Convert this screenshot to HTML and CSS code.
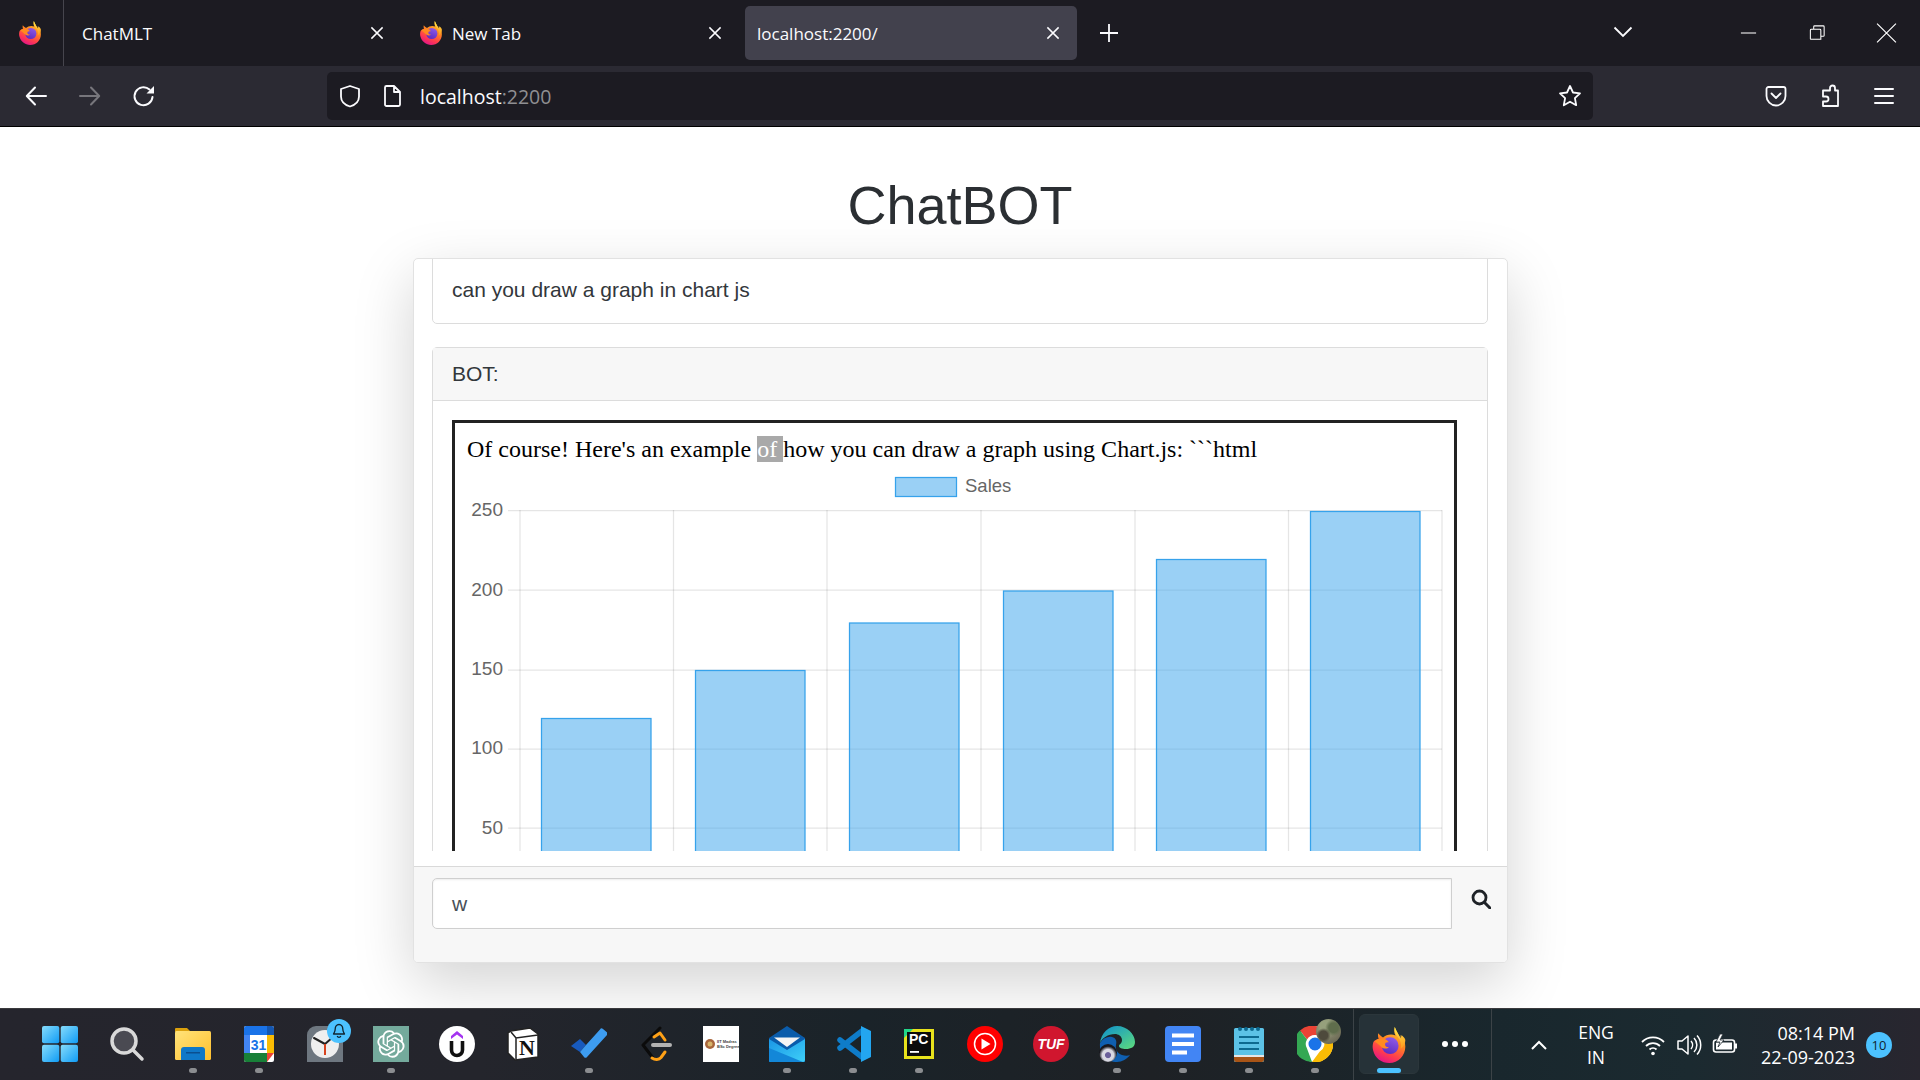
FILE: index.html
```html
<!DOCTYPE html>
<html lang="en">
<head>
<meta charset="utf-8">
<title>ChatBOT</title>
<link rel="stylesheet" href="styles.css">
</head>
<body>
<svg class="defs" aria-hidden="true">
  <defs>
    <linearGradient id="ffBody" x1="0.8" y1="0" x2="0.35" y2="1">
      <stop offset="0" stop-color="#ffd13a"/><stop offset="0.4" stop-color="#ff8a1f"/><stop offset="0.75" stop-color="#ff3b4e"/><stop offset="1" stop-color="#e31587"/>
    </linearGradient>
    <linearGradient id="ffTail" x1="0.4" y1="0" x2="0.6" y2="1">
      <stop offset="0" stop-color="#ffe847"/><stop offset="1" stop-color="#ff9a1f"/>
    </linearGradient>
    <linearGradient id="ffCore" x1="0.7" y1="0" x2="0.3" y2="1">
      <stop offset="0" stop-color="#8f5ae8"/><stop offset="1" stop-color="#5b2bc0"/>
    </linearGradient>
    <linearGradient id="winG" x1="0" y1="0" x2="1" y2="1">
      <stop offset="0" stop-color="#86dcfb"/><stop offset="1" stop-color="#0f9bf5"/>
    </linearGradient>
    <linearGradient id="folderG" x1="0" y1="0" x2="1" y2="1">
      <stop offset="0" stop-color="#ffe37a"/><stop offset="1" stop-color="#ffc02e"/>
    </linearGradient>
    <linearGradient id="mailG" x1="0" y1="0" x2="1" y2="1">
      <stop offset="0" stop-color="#1a96e6"/><stop offset="1" stop-color="#3fd0f8"/>
    </linearGradient>
    <linearGradient id="edgeG" x1="0" y1="0" x2="1" y2="1">
      <stop offset="0" stop-color="#0c8fd0"/><stop offset="1" stop-color="#5fdc7c"/>
    </linearGradient>
    <symbol id="firefox" viewBox="1.500 1 29 30">
      <path fill="url(#ffBody)" d="M3 13.500C2.200 16 2.200 18 2.800 20.500 4.300 26.800 9.800 31 16.200 31 23.800 31 29.600 25 29.600 17.500c0-3.200-1-6.200-3-8.600-.4-.5-.8-.9-1.200-1.300.5 1.600.4 2.800 0 3.800C24.600 8 22.600 5.600 20.800 1c-.8 2.600-.6 5 .6 7C18 6.600 13.500 7.300 11 9.800 10 9 8.200 7.800 7 6.200 6.600 8 6.800 9.600 7.400 10.800 5.600 11 4 12.200 3 13.500z"/>
      <path fill="url(#ffTail)" d="M20.800 1c-.5 3 .3 5.700 2.300 8 2.600 3 3.600 6.400 2.600 10.200 2.600-1.800 3.900-4.600 3.900-7.200 0-1.200-.8-2.400-3.200-4.400l-.1 3.400C24.600 8 22.600 5.600 20.800 1z"/>
      <circle cx="17" cy="16.600" r="7" fill="url(#ffCore)"/>
      <path fill="#ff8a1f" d="M4 13.200c2.200-2.400 5.200-3 8.200-2.200 1.600.4 3 1.400 3.600 2.800-2.400-.4-3.400.8-3 2.400.3 1.200 1.800 1.800 3.200 1.600-1.200 1.600-4.600 1.600-6.400-.2C8.400 16.400 6.600 14.400 4 13.200z"/>
    </symbol>
    <symbol id="close" viewBox="0 0 16 16"><path d="M3 3l10 10M13 3L3 13" fill="none" stroke="#fbfbfe" stroke-width="1.300"/></symbol>
  </defs>
</svg>

<header class="chrome">
  <div class="tabbar">
    <div class="ff-button"><svg class="ico24"><use href="#firefox"/></svg></div>
    <div class="tab"><span class="tab-title tab-title-plain">ChatMLT</span><svg class="tab-x"><use href="#close"/></svg></div>
    <div class="tab"><svg class="ico24"><use href="#firefox"/></svg><span class="tab-title">New Tab</span><svg class="tab-x"><use href="#close"/></svg></div>
    <div class="tab tab-active"><span class="tab-title">localhost:2200/</span><svg class="tab-x"><use href="#close"/></svg></div>
    <svg class="newtab" viewBox="0 0 20 20"><path d="M10 1v18M1 10h18" fill="none" stroke="#fbfbfe" stroke-width="1.800"/></svg>
    <svg class="tablist" viewBox="0 0 20 12"><path d="M1.500 1.500L10 10l8.500-8.500" fill="none" stroke="#fbfbfe" stroke-width="1.800"/></svg>
    <div class="winctl">
      <svg class="wc" viewBox="0 0 20 20"><path d="M2 10h16" stroke="#fff" stroke-width="1.100"/></svg>
      <svg class="wc" viewBox="0 0 20 20"><path d="M6 6V3.500A1 1 0 0 1 7 2.500h9a1 1 0 0 1 1 1v9a1 1 0 0 1-1 1h-2.500M3.500 6h9a1 1 0 0 1 1 1v9.500h-10.500a.5.5 0 0 1-.5-.5V7a1 1 0 0 1 1-1z" fill="none" stroke="#fff" stroke-width="1.100"/></svg>
      <svg class="wc wc-x" viewBox="0 0 20 20"><path d="M1 1l18 18M19 1L1 19" stroke="#fff" stroke-width="1.100" fill="none"/></svg>
    </div>
  </div>
  <div class="toolbar">
    <div class="navbtn"><svg class="ico24" viewBox="0 0 24 24"><path d="M22 12H3M11 3.500L2.800 12l8.200 8.500" fill="none" stroke="#fbfbfe" stroke-width="2" stroke-linecap="round" stroke-linejoin="round"/></svg></div>
    <div class="navbtn"><svg class="ico24" viewBox="0 0 24 24"><path d="M2 12h19M13 3.500L21.200 12 13 20.500" fill="none" stroke="#77767c" stroke-width="2" stroke-linecap="round" stroke-linejoin="round"/></svg></div>
    <div class="navbtn"><svg class="ico24" viewBox="0 0 24 24"><path d="M20.500 13a9 9 0 1 1-3-7.500" fill="none" stroke="#fbfbfe" stroke-width="2" stroke-linecap="round"/><path d="M22 2v7.500h-7.500z" fill="#fbfbfe"/></svg></div>
    <div class="urlbar">
      <svg class="ico24 shield" viewBox="0 0 24 24"><path d="M12 2l9 3v7.500c0 5-4 8.500-9 10-5-1.500-9-5-9-10V5z" fill="none" stroke="#fbfbfe" stroke-width="1.800" stroke-linejoin="round"/></svg>
      <svg class="ico24 pageicon" viewBox="0 0 24 24"><path d="M5 3.500A1.500 1.500 0 0 1 6.500 2H14l6 6v12.500a1.500 1.500 0 0 1-1.500 1.500h-12A1.500 1.500 0 0 1 5 20.500zM14 2v6h6" fill="none" stroke="#fbfbfe" stroke-width="1.800" stroke-linejoin="round"/></svg>
      <div class="url"><span class="url-host">localhost</span><span class="url-port">:2200</span></div>
      <svg class="ico24 star" viewBox="0 0 24 24"><path d="M12 2l3 6.500 7 .9-5.100 4.800 1.300 7L12 17.700l-6.200 3.500 1.300-7L2 9.400l7-.9z" fill="none" stroke="#fbfbfe" stroke-width="1.800" stroke-linejoin="round"/></svg>
    </div>
    <div class="toolright">
      <div class="navbtn"><svg class="ico24" viewBox="0 0 24 24"><path d="M2.500 5a2 2 0 0 1 2-2h15a2 2 0 0 1 2 2v7a9.500 9.500 0 0 1-19 0z" fill="none" stroke="#fbfbfe" stroke-width="1.800"/><path d="M7.500 9.500L12 14l4.500-4.500" fill="none" stroke="#fbfbfe" stroke-width="1.800" stroke-linecap="round" stroke-linejoin="round"/></svg></div>
      <div class="navbtn"><svg class="ico24" viewBox="0 0 24 24"><path d="M9 6.500H12V4a2.500 2.500 0 0 1 5 0V6.500h3V22H5v-4.500h3a2.500 2.500 0 0 0 0-5H5V6.500h4" fill="none" stroke="#fbfbfe" stroke-width="1.800" stroke-linejoin="round"/></svg></div>
      <div class="navbtn"><svg class="ico24" viewBox="0 0 24 24"><path d="M3 5h18M3 12h18M3 19h18" stroke="#fbfbfe" stroke-width="2" stroke-linecap="round"/></svg></div>
    </div>
  </div>
</header>

<main class="page">
  <h1 class="title">ChatBOT</h1>
  <section class="chat-card">
    <div class="chat-body">
      <div class="chat-scroll">
        <div class="msg msg-user">can you draw a graph in chart js</div>
        <div class="msg msg-bot">
          <div class="msg-head">BOT:</div>
          <div class="msg-content">
            <div class="bot-frame">
              <p class="bot-text">Of course! Here's an example <span class="sel">of </span>how you can draw a graph using Chart.js: ```html</p>
              <svg class="chart" viewBox="455 465 1000 400">
                <g class="grid">
                  <path d="M520 510V870M673.500 510V870M827 510V870M981 510V870M1135 510V870M1288.500 510V870M1442 510V870"/>
                  <path d="M508 510.500H1442M508 590H1442M508 670H1442M508 749H1442M508 828H1442"/>
                </g>
                <g class="bars">
                  <rect x="541.500" y="718.500" width="109.500" height="160"/>
                  <rect x="695.500" y="670.500" width="109.500" height="210"/>
                  <rect x="849.500" y="623" width="109.500" height="260"/>
                  <rect x="1003.500" y="591" width="109.500" height="290"/>
                  <rect x="1156.500" y="559.500" width="109.500" height="320"/>
                  <rect x="1310.500" y="511.500" width="109.500" height="370"/>
                </g>
                <rect class="legend-box" x="895.500" y="477.500" width="61" height="19"/>
                <text class="legend-text" x="965" y="492">Sales</text>
                <g class="ticks">
                  <text x="503" y="516">250</text>
                  <text x="503" y="596">200</text>
                  <text x="503" y="675">150</text>
                  <text x="503" y="754">100</text>
                  <text x="503" y="834">50</text>
                </g>
              </svg>
            </div>
          </div>
        </div>
      </div>
    </div>
    <div class="chat-foot">
      <div class="chat-input">w</div>
      <svg class="send" viewBox="0 0 20 20"><circle cx="8.500" cy="8.500" r="6.500" fill="none" stroke="#1f2328" stroke-width="2.800"/><path d="M13.500 13.500L19 19" stroke="#1f2328" stroke-width="3" stroke-linecap="round"/></svg>
    </div>
  </section>
</main>

<footer class="taskbar">
  <div class="apps">
    <div class="app app-win"><svg class="ti" viewBox="0 0 36 36"><rect x="0" y="0" width="17.300" height="17.300" rx="2" fill="url(#winG)"/><rect x="18.700" y="0" width="17.300" height="17.300" rx="2" fill="url(#winG)"/><rect x="0" y="18.700" width="17.300" height="17.300" rx="2" fill="url(#winG)"/><rect x="18.700" y="18.700" width="17.300" height="17.300" rx="2" fill="url(#winG)"/></svg><i class="no-dot"></i></div>
    <div class="app"><svg class="ti" viewBox="0 0 36 36"><circle cx="15" cy="15" r="12" fill="#4a4a52" stroke="#d9d9d9" stroke-width="3.500"/><path d="M24 24l9 9" stroke="#d9d9d9" stroke-width="3.500" stroke-linecap="round"/></svg><i class="no-dot"></i></div>
    <div class="app"><svg class="ti" viewBox="0 0 36 36"><path d="M0 3a1 1 0 0 1 1-1h11l4 4h-16z" fill="#dba10d"/><rect y="5" width="36" height="29" rx="1.500" fill="url(#folderG)"/><path d="M6 34V24a3 3 0 0 1 3-3h18a3 3 0 0 1 3 3v10z" fill="#0f78c8"/><rect x="11" y="26" width="14" height="1.500" fill="#0b4f8f"/></svg><i class="dot"></i></div>
    <div class="app"><svg class="ti" viewBox="0 0 36 36"><rect x="3" y="0" width="30" height="36" rx="2" fill="#fff"/><path d="M5 0h21v9H3V2a2 2 0 0 1 2-2z" fill="#1a73e8"/><path d="M26 0h5a2 2 0 0 1 2 2v7h-7z" fill="#1557b0"/><path d="M26 9h7v18h-7z" fill="#fbbc04"/><path d="M3 9h6v18H3z" fill="#4285f4"/><path d="M3 27h23v9H5a2 2 0 0 1-2-2z" fill="#188038"/><path d="M26 27h7l-7 9z" fill="#ea4335"/><text class="t-cal" x="17.500" y="23.500">31</text></svg><i class="dot"></i></div>
    <div class="app app-clock"><svg class="ti" viewBox="0 0 36 36"><path d="M9 0h18a9 9 0 0 1 9 9v27H0V9a9 9 0 0 1 9-9z" fill="#6e7780"/><circle cx="18" cy="18" r="14" fill="#efefef"/><path d="M18 18L7 12M18 18l8-7" stroke="#222" stroke-width="2" stroke-linecap="round"/><path d="M18 18v11" stroke="#d9431e" stroke-width="2"/></svg><span class="bell"><svg class="bell-i" viewBox="0 0 16 16"><path d="M8 1.500c-2.500 0-3.800 2-3.800 4.500 0 2.800-1 3.800-1.700 5h11c-.7-1.200-1.700-2.200-1.700-5C11.800 3.500 10.500 1.500 8 1.500zM6.200 13a1.900 1.900 0 0 0 3.600 0" fill="none" stroke="#10242f" stroke-width="1.300" stroke-linejoin="round"/></svg></span><i class="no-dot"></i></div>
    <div class="app"><svg class="ti" viewBox="0 0 36 36"><rect width="36" height="36" fill="#74aa9c"/><svg x="4" y="4" width="28" height="28" viewBox="0 0 41 41"><path fill="#fff" d="M37.532 16.87a9.963 9.963 0 0 0-.856-8.184 10.078 10.078 0 0 0-10.855-4.835A9.964 9.964 0 0 0 18.306.5a10.079 10.079 0 0 0-9.614 6.977 9.967 9.967 0 0 0-6.664 4.834 10.08 10.08 0 0 0 1.24 11.817 9.965 9.965 0 0 0 .856 8.185 10.079 10.079 0 0 0 10.855 4.835 9.965 9.965 0 0 0 7.516 3.35 10.078 10.078 0 0 0 9.617-6.981 9.967 9.967 0 0 0 6.663-4.834 10.079 10.079 0 0 0-1.243-11.813ZM22.498 37.886a7.474 7.474 0 0 1-4.799-1.735c.061-.033.168-.091.237-.134l7.964-4.6a1.294 1.294 0 0 0 .655-1.134V19.054l3.366 1.944a.12.12 0 0 1 .066.092v9.299a7.505 7.505 0 0 1-7.49 7.496ZM6.392 31.006a7.471 7.471 0 0 1-.894-5.023c.06.036.162.099.237.141l7.964 4.6a1.297 1.297 0 0 0 1.308 0l9.724-5.614v3.888a.12.12 0 0 1-.048.103l-8.051 4.649a7.504 7.504 0 0 1-10.24-2.744ZM4.297 13.62A7.469 7.469 0 0 1 8.2 10.333c0 .068-.004.19-.004.274v9.201a1.294 1.294 0 0 0 .654 1.132l9.723 5.614-3.366 1.944a.12.12 0 0 1-.114.01L7.04 23.856a7.504 7.504 0 0 1-2.743-10.237Zm27.658 6.437-9.724-5.615 3.367-1.943a.121.121 0 0 1 .113-.01l8.052 4.648a7.498 7.498 0 0 1-1.158 13.528v-9.476a1.293 1.293 0 0 0-.65-1.132Zm3.35-5.043c-.059-.037-.162-.099-.236-.141l-7.965-4.6a1.298 1.298 0 0 0-1.308 0l-9.723 5.614v-3.888a.12.12 0 0 1 .048-.103l8.05-4.645a7.497 7.497 0 0 1 11.135 7.763Zm-21.063 6.929-3.367-1.944a.12.12 0 0 1-.065-.092v-9.299a7.497 7.497 0 0 1 12.293-5.756 6.94 6.94 0 0 0-.236.134l-7.965 4.6a1.294 1.294 0 0 0-.654 1.132l-.006 11.225Zm1.829-3.943 4.33-2.501 4.332 2.5v5l-4.331 2.5-4.331-2.5V18Z"/></svg></svg><i class="dot"></i></div>
    <div class="app"><svg class="ti" viewBox="0 0 36 36"><circle cx="18" cy="18" r="18" fill="#fff"/><path d="M12 10l6-5 6 5v3l-6-4.500L12 13z" fill="#a435f0"/><path d="M12.500 15v9a5.500 5.500 0 0 0 11 0v-9" fill="none" stroke="#111" stroke-width="3.600"/></svg><i class="no-dot"></i></div>
    <div class="app"><svg class="ti" viewBox="0 0 36 36"><path d="M6 5l19-3 8 6v23l-23 3-7-7V7z" fill="#fff" stroke="#222" stroke-width="1.500"/><path d="M6 6l5 6 22-3M11 12v21" fill="none" stroke="#222" stroke-width="1.500"/><text class="t-notion" x="22" y="29">N</text></svg><i class="no-dot"></i></div>
    <div class="app"><svg class="ti" viewBox="0 0 36 36"><path d="M0 20l9-7 6 6-6 7z" fill="#185abd"/><path d="M9 26l4 5a2 2 0 0 0 3 0L36 9a2 2 0 0 0-.4-3L32 3a2 2 0 0 0-3 .4L15 19z" fill="#3d9cf0"/></svg><i class="dot"></i></div>
    <div class="app"><svg class="ti" viewBox="0 0 36 36"><path d="M23 2L6 19l10 13" fill="none" stroke="#0b0b0b" stroke-width="3" stroke-linecap="round" stroke-linejoin="round"/><path d="M17 11l6-4 5 7M15 32c3 2 7 2 9-.5l4-5.500" fill="none" stroke="#ffa116" stroke-width="3" stroke-linecap="round" stroke-linejoin="round"/><path d="M16 19h17" stroke="#b3b3b3" stroke-width="4" stroke-linecap="round"/></svg><i class="no-dot"></i></div>
    <div class="app"><svg class="ti" viewBox="0 0 36 36"><rect width="36" height="36" fill="#fff"/><circle cx="7" cy="18" r="5" fill="#a9663c"/><circle cx="7" cy="18" r="2.500" fill="#d7b46a"/><text class="t-iit" x="14" y="17">IIT Madras</text><text class="t-iit" x="14" y="22">BSc Degree</text></svg><i class="no-dot"></i></div>
    <div class="app"><svg class="ti" viewBox="0 0 36 36"><path d="M0 12L18 0l18 12v24H0z" fill="#0a5cab"/><path d="M5 11.500h26L18 21z" fill="#f4f4f4"/><path d="M0 13l18 11 18-11v21a2 2 0 0 1-2 2H2a2 2 0 0 1-2-2z" fill="url(#mailG)"/><path d="M0 34V22l34 14H2a2 2 0 0 1-2-2z" fill="#1387d8"/></svg><i class="dot"></i></div>
    <div class="app"><svg class="ti" viewBox="0 0 36 36"><path d="M27 5L5 22M27 31L5 14" fill="none" stroke="#0e7cc9" stroke-width="5.500" stroke-linecap="round"/><path d="M26 0l10 5v26l-10 5z" fill="#23a6f0"/></svg><i class="dot"></i></div>
    <div class="app"><svg class="ti" viewBox="0 0 36 36"><rect x="3" y="3" width="30" height="30" fill="#e8e21c"/><path d="M3 3h9l-9 9z" fill="#21d789"/><rect x="6" y="6" width="24" height="24" fill="#0c0c0c"/><text class="t-pc" x="8" y="18">PC</text><rect x="9" y="25" width="9" height="1.800" fill="#fff"/></svg><i class="dot"></i></div>
    <div class="app"><svg class="ti" viewBox="0 0 36 36"><circle cx="18" cy="18" r="18" fill="#f00"/><circle cx="18" cy="18" r="10.500" fill="none" stroke="#fff" stroke-width="1.500"/><path d="M14.500 12.500l9 5.500-9 5.500z" fill="#fff"/></svg><i class="no-dot"></i></div>
    <div class="app"><svg class="ti" viewBox="0 0 36 36"><circle cx="18" cy="18" r="18" fill="#d0162e"/><text class="t-tuf" x="18" y="22.500">TUF</text></svg><i class="no-dot"></i></div>
    <div class="app app-edge"><svg class="ti" viewBox="0 0 36 36"><path d="M1 17C2 7 10 0 18 0c10 0 18 8 18 16 0 5-4 7-9 7-4 0-7-1-7-3 0-2 3-2 3-6 0-4-4-6-7-6C9 8 3 12 1 17z" fill="url(#edgeG)"/><path d="M1 17c3-5 8-7 12-6 4 1 5 4 4 8-1 4 1 8 6 10 3 1 6 1 8 0-3 4-8 7-13 7C8 36 0 28 1 17z" fill="#0f5fb0"/></svg><span class="avatar avatar-edge"></span><i class="dot"></i></div>
    <div class="app"><svg class="ti" viewBox="0 0 36 36"><rect width="36" height="36" rx="4" fill="#4285f4"/><rect x="7" y="7.500" width="22" height="4" fill="#fff"/><rect x="7" y="16" width="22" height="4" fill="#fff"/><rect x="7" y="24.500" width="15" height="4" fill="#fff"/></svg><i class="dot"></i></div>
    <div class="app"><svg class="ti" viewBox="0 0 36 36"><rect x="3" y="2" width="30" height="34" rx="1.500" fill="#5cc2e6"/><path d="M3 30h30v4a2 2 0 0 1-2 2H5a2 2 0 0 1-2-2z" fill="#a85416"/><rect x="3" y="29" width="30" height="2" fill="#e6e6e6"/><g fill="#0d6a90"><circle cx="9" cy="3" r="2"/><circle cx="15" cy="3" r="2"/><circle cx="21" cy="3" r="2"/><circle cx="27" cy="3" r="2"/><rect x="8" y="10" width="20" height="2"/><rect x="8" y="16" width="20" height="2"/><rect x="8" y="22" width="20" height="2"/></g></svg><i class="dot"></i></div>
    <div class="app app-chrome"><svg class="ti" viewBox="0 0 36 36"><circle cx="18" cy="18" r="18" fill="#fff"/><path d="M18 0a18 18 0 0 1 15.600 9H18a9 9 0 0 0-8 4.500L3 4.500A18 18 0 0 1 18 0z" fill="#ea4335"/><path d="M3 4.500l7 9a9 9 0 0 0 0 9L15 36A18 18 0 0 1 3 4.500z" fill="#34a853"/><path d="M33.600 9A18 18 0 0 1 15 36l7.800-10.400A9 9 0 0 0 26 13z" fill="#fbbc04"/><circle cx="18" cy="18" r="7.500" fill="#1a73e8" stroke="#fff" stroke-width="2"/></svg><span class="avatar avatar-chrome"></span><i class="dot"></i></div>
    <i class="sep"></i>
    <div class="app app-active"><svg class="ti ti-ff"><use href="#firefox"/></svg><i class="bar-active"></i></div>
    <div class="app app-more"><span class="more"><b></b><b></b><b></b></span></div>
    <i class="sep sep-2"></i>
  </div>
  <div class="tray">
    <svg class="chev" viewBox="0 0 18 12"><path d="M2 10l7-7 7 7" fill="none" stroke="#fff" stroke-width="2"/></svg>
    <div class="lang">ENG<br>IN</div>
    <svg class="tray-i" viewBox="0 0 26 24"><path d="M2 9a15.500 15.500 0 0 1 22 0M6 13a10 10 0 0 1 14 0M9.500 16.500a5 5 0 0 1 7 0" fill="none" stroke="#fff" stroke-width="1.800"/><circle cx="13" cy="20.500" r="1.800" fill="#fff"/></svg>
    <svg class="tray-i" viewBox="0 0 26 24"><path d="M2 8h4l6-5v18l-6-5H2z" fill="none" stroke="#fff" stroke-width="1.500" stroke-linejoin="round"/><path d="M15 8a6 6 0 0 1 0 8M18 5a10 10 0 0 1 0 14M21 2.500a14 14 0 0 1 0 19" fill="none" stroke="#fff" stroke-width="1.500"/></svg>
    <svg class="tray-i" viewBox="0 0 26 24"><rect x="1.500" y="7" width="21" height="12" rx="2.500" fill="none" stroke="#fff" stroke-width="1.600"/><rect x="23" y="10.500" width="2" height="5" fill="#fff"/><rect x="4" y="9.500" width="16" height="7" fill="#fff"/><path d="M8 1L4 9h4l-2 5 6-7H8l3-6z" fill="#fff" stroke="#1f2a30" stroke-width=".8"/></svg>
    <div class="clock">08:14 PM<br>22-09-2023</div>
    <span class="notif">10</span>
  </div>
</footer>
</body>
</html>
```
FILE: styles.css
```css
* { box-sizing: border-box; }
html, body { margin: 0; padding: 0; }
body {
  width: 1920px;
  height: 1080px;
  overflow: hidden;
  display: flex;
  flex-direction: column;
  background: #fff;
  font-family: "Liberation Sans", Arial, sans-serif;
}
.defs { display: block; width: 0; height: 0; }

/* browser chrome */
.chrome { flex: none; background: #1c1b22; color: #fbfbfe; font-family: "Open Sans", "Noto Sans", sans-serif; border-bottom: 1px solid #000; }
.tabbar { height: 66px; display: flex; align-items: flex-start; background: #1c1b22; }
.ff-button { width: 64px; height: 66px; flex: none; display: flex; align-items: center; justify-content: center; padding-right: 4px; border-right: 1px solid #46454d; }
.ico24 { width: 24px; height: 24px; flex: none; display: block; }
.tab { width: 332px; height: 54px; margin: 6px 0 0 6px; padding: 0 12px; display: flex; align-items: center; border-radius: 5px; flex: none; font-size: 17px; }
.tab:nth-child(2) { margin-left: 5px; }
.tab-active { background: #42414d; }
.tab-title { margin-left: 9px; }
.tab-title-plain { margin-left: 1px; }
.tab-active .tab-title { margin-left: 0; }
.tab-x { width: 18px; height: 18px; margin: 0 3px 0 auto; flex: none; }
.newtab { width: 20px; height: 20px; margin: 23px 0 0 22px; flex: none; }
.tablist { width: 20px; height: 12px; margin: 26px 0 0 494px; flex: none; }
.winctl { margin-left: auto; display: flex; width: 206px; flex: none; }
.wc { width: 69px; height: 66px; padding: 23px 25px; flex: none; }
.wc-x { padding: 22px 24px; }

.toolbar { height: 60px; background: #2b2a33; display: flex; align-items: center; padding: 0 9px; }
.navbtn { width: 54px; height: 48px; display: flex; align-items: center; justify-content: center; flex: none; }
.urlbar { width: 1266px; height: 48px; margin-left: 156px; background: #1c1b22; border-radius: 5px; display: flex; align-items: center; padding: 0 11px; flex: none; }
.pageicon { margin-left: 18px; }
.url { margin: 1px 0 0 16px; font-size: 19.500px; }
.url-port { color: #8f8f92; }
.star { margin-left: auto; }
.toolright { margin-left: auto; display: flex; }

/* page */
.page { flex: 1; min-height: 0; }
.title { margin: 46px 0 21px; text-align: center; font-size: 54px; line-height: 64px; font-weight: 400; color: #2b2f33; }
.chat-card { width: 1095px; height: 705px; margin: 0 0 0 413px; background: #fff; border: 1px solid #e2e2e2; border-radius: 5px; box-shadow: 0 20px 60px rgba(0,0,0,.175); display: flex; flex-direction: column; overflow: hidden; }
.chat-body { flex: none; height: 607px; padding: 0 19px 15px 18px; }
.chat-scroll { height: 592px; overflow: hidden; }
.msg { border: 1px solid #dcdcdc; border-radius: 5px; font-size: 21px; line-height: 30px; color: #33373b; }
.msg-user { margin-top: -9px; padding: 24px 19px 18px; }
.msg-bot { margin-top: 23px; height: 800px; }
.msg-head { background: #f7f7f7; padding: 11px 19px; height: 53px; border-bottom: 1px solid #dcdcdc; }
.msg-content { padding: 19px; }
.bot-frame { width: 1005px; border: 3px solid #222; height: 700px; }
.bot-text { margin: 12px 12px 2px; font-family: "Liberation Serif", "Times New Roman", serif; font-size: 24px; line-height: 28px; color: #000; white-space: nowrap; }
.sel { background: #a9a9a9; color: #fff; }
.chart { display: block; width: 1000px; height: 400px; }
.grid path { fill: none; stroke: rgba(0,0,0,.1); stroke-width: 1.250; }
.bars rect { fill: rgba(54,162,235,.5); stroke: #36a2eb; stroke-width: 1.250; }
.legend-box { fill: rgba(54,162,235,.5); stroke: #36a2eb; stroke-width: 1.250; }
.legend-text { font-size: 18.500px; fill: #666; }
.ticks text { font-size: 19px; fill: #666; text-anchor: end; }
.chat-foot { flex: 1; background: #f7f7f7; border-top: 1px solid #d9d9d9; padding: 11px 16px 0 18px; display: flex; align-items: flex-start; }
.chat-input { flex: none; width: 1020px; height: 51px; background: #fff; border: 1px solid #cfcfcf; border-radius: 5px 0 0 5px; box-shadow: inset 0 1px 2px rgba(0,0,0,.075); padding: 12px 19px; font-size: 21px; line-height: 26px; color: #495057; }
.send { width: 20px; height: 20px; margin: 11px 0 0 19px; flex: none; }

/* taskbar */
.taskbar { flex: none; height: 72px; display: flex; border-top: 1px solid #3a3a3d; background: linear-gradient(90deg, #25252d 0%, #24252c 25%, #1a2329 45%, #1e2125 60%, #19272d 78%, #1b2a30 88%, #28262f 100%); color: #fff; font-family: "Open Sans", "Noto Sans", sans-serif; }
.apps { display: flex; padding-left: 28px; flex: none; height: 71px; }
.app { width: 66px; flex: none; display: flex; flex-direction: column; align-items: center; padding-top: 17px; position: relative; }
.app-win .ti { margin-right: 3px; }
.ti { width: 36px; height: 36px; display: block; flex: none; }
.dot { width: 8px; height: 5px; margin-top: 6px; border-radius: 3px; background: #8b8d90; }
.no-dot { display: block; height: 5px; margin-top: 6px; }
.sep { width: 1px; height: 71px; background: #3c4347; margin-left: 5px; flex: none; }
.app-active { width: 60px; height: 60px; margin: 5px 0 0 5px; padding-top: 12px; background: #263238; border-radius: 6px; border: 1px solid #2b363b; }
.ti-ff { width: 36px; height: 36px; }
.bar-active { display: block; width: 24px; height: 5px; margin-top: 5px; border-radius: 3px; background: #4cc2ff; }
.app-more { width: 66px; margin-left: 3px; padding-top: 32px; }
.more { display: flex; gap: 4px; }
.more b { width: 6px; height: 6px; border-radius: 50%; background: #fff; display: block; }
.sep-2 { margin-left: 3px; }
.bell { position: absolute; top: 10px; left: 35px; width: 24px; height: 24px; border-radius: 50%; background: #4cc2ff; display: flex; align-items: center; justify-content: center; }
.bell-i { width: 16px; height: 16px; }
.avatar { position: absolute; border-radius: 50%; }
.avatar-edge { left: 15px; top: 35px; width: 18px; height: 18px; background: radial-gradient(circle at 50% 62%, #6a5f9a 0 18%, #d8d8e2 24% 40%, #17171d 62%); }
.avatar-chrome { left: 34px; top: 10px; width: 25px; height: 25px; background: radial-gradient(circle at 30% 65%, #4e4a3c 0 18%, transparent 30%), radial-gradient(circle at 70% 35%, #5f6d4c 0 20%, transparent 35%), radial-gradient(circle at 40% 30%, #96a07c 0 25%, #7b7a62 55%, #5e5a4a 100%); }
.tray { flex: 1; position: relative; display: flex; align-items: center; padding-left: 38px; }
.chev { width: 18px; height: 12px; flex: none; }
.lang { width: 60px; margin-left: 18px; text-align: center; font-size: 17.500px; line-height: 25px; flex: none; }
.tray-i { width: 26px; height: 24px; margin-left: 10px; flex: none; }
.lang + .tray-i { margin-left: 14px; }
.clock { margin-left: auto; text-align: right; font-size: 18px; line-height: 24px; }
.notif { width: 26px; height: 26px; margin: 0 28px 0 11px; border-radius: 50%; background: #4cc2ff; color: #10242f; font-size: 13px; line-height: 26px; text-align: center; flex: none; }

/* icon lettering */
.t-cal { font: 700 14px "Liberation Sans", sans-serif; fill: #1a73e8; text-anchor: middle; }
.t-notion { font: 700 22px "Liberation Serif", serif; fill: #111; text-anchor: middle; }
.t-iit { font: 700 4px "Liberation Sans", sans-serif; fill: #444; }
.t-pc { font: 700 14px "Liberation Sans", sans-serif; fill: #fff; }
.t-tuf { font: italic 700 14px "Liberation Sans", sans-serif; fill: #fff; text-anchor: middle; }
```
